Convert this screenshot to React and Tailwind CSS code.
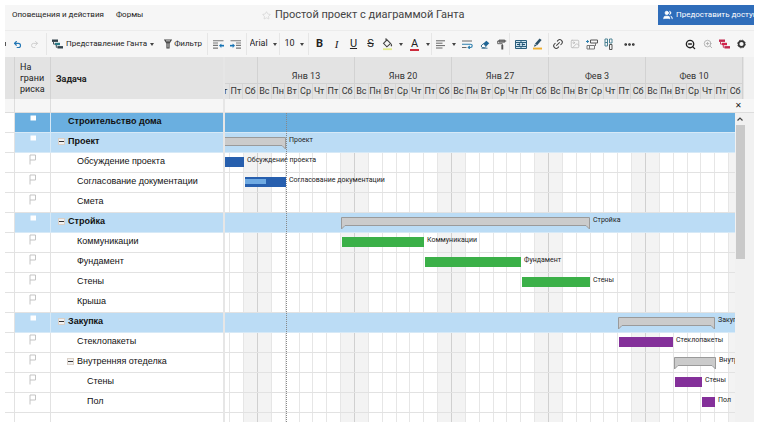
import React, { useState } from 'react';
import { Undo2, Redo2, Star, Link2, Image, ZoomOut, ZoomIn, Users, Ellipsis } from 'lucide-react';

// One week is 97px wide, the first full week starts on day 0
const WEEK = 97;
const DAY = WEEK / 7;

const weeks = ['', 'Янв 13', 'Янв 20', 'Янв 27', 'Фев 3', 'Фев 10'];
const days = ['Вс', 'Пн', 'Вт', 'Ср', 'Чт', 'Пт', 'Сб'];

const tasks = [
  { name: 'Строительство дома', level: 0, type: 'root' },
  { name: 'Проект', level: 0, type: 'group', start: -6, end: 2 },
  { name: 'Обсуждение проекта', level: 1, type: 'task', start: -6, end: -1, color: 'blue' },
  { name: 'Согласование документации', level: 1, type: 'task', start: -1, end: 2, color: 'blue', progress: 50 },
  { name: 'Смета', level: 1, type: 'task' },
  { name: 'Стройка', level: 0, type: 'group', start: 6, end: 24 },
  { name: 'Коммуникации', level: 1, type: 'task', start: 6, end: 12, color: 'green' },
  { name: 'Фундамент', level: 1, type: 'task', start: 12, end: 19, color: 'green' },
  { name: 'Стены', level: 1, type: 'task', start: 19, end: 24, color: 'green' },
  { name: 'Крыша', level: 1, type: 'task' },
  { name: 'Закупка', level: 0, type: 'group', start: 26, end: 33 },
  { name: 'Стеклопакеты', level: 1, type: 'task', start: 26, end: 30, color: 'purple' },
  { name: 'Внутренняя отеделка', level: 1, type: 'subgroup', start: 30, end: 33 },
  { name: 'Стены', level: 2, type: 'task', start: 30, end: 32, color: 'purple' },
  { name: 'Пол', level: 2, type: 'task', start: 32, end: 33, color: 'purple' },
];

const rowBg = {
  root: 'bg-[#6aafe0]',
  group: 'bg-[#bbdcf5]',
  subgroup: '',
  task: '',
};

const barBg = {
  blue: 'bg-[#275fae]',
  green: 'bg-[#3bb048]',
  purple: 'bg-[#84309a]',
};

const indent = ['pl-[17px]', 'pl-[26px]', 'pl-9'];

const Caret = () => (
  <svg className="shrink-0" width="4" height="3" viewBox="0 0 4 3" aria-hidden="true">
    <path d="M0 0h4L2 3z" fill="#444" />
  </svg>
);

const GanttIcon = ({ a, b }) => (
  <svg className="shrink-0" width="11" height="10" viewBox="0 0 11 10" aria-hidden="true">
    <path d="M0 0.5h6v2.4H0z" fill={a} />
    <path d="M3 3.8h5v2.4H3z" fill={b} />
    <path d="M5.5 7.1H11v2.4H5.5z" fill={a} />
    <path d="M1.5 2.9v2.2H3M4.3 6v2.3h1.2" stroke={a} strokeWidth="0.9" fill="none" />
  </svg>
);

const FilterIcon = () => (
  <svg className="shrink-0" width="8" height="10" viewBox="0 0 8 10" fill="none" stroke="#444" strokeWidth="1.2" aria-hidden="true">
    <path d="M0.8 1h6.4L5 4.5V9H3V4.5z" />
    <path d="M2 2.2h4L4 5z" fill="#444" stroke="none" />
  </svg>
);

const OutdentIcon = ({ flip }) => (
  <svg className={flip ? '-scale-x-100' : ''} width="11" height="9" viewBox="0 0 11 9" aria-hidden="true">
    <path d="M0 0.7h10.5M0 3h5M0 5.4h5M0 8.1h5" stroke="#777" strokeWidth="1.1" />
    <path d="M6.2 5.6l2-1.7v1.2H11v1.2H8.2v1.2z" fill="#1673b5" stroke="#1673b5" strokeWidth="0.4" />
  </svg>
);

const BucketIcon = () => (
  <svg width="11" height="14" viewBox="0 0 11 14" aria-hidden="true">
    <path d="M4 1.2v3M1.5 6.3L5 2.8l3.6 3.6-3.7 3.4z" fill="none" stroke="#444" strokeWidth="1.1" />
    <path d="M9.4 6.5c.9 1.4 1.1 2.8 0 2.9-1 0-.8-1.5 0-2.9z" fill="#444" />
    <path d="M1 11.3h9v1.8H1z" fill="#e3ec8e" />
  </svg>
);

const AlignIcon = () => (
  <svg width="10" height="9" viewBox="0 0 10 9" aria-hidden="true">
    <path d="M0 0.8h9M0 3.2h6.5M0 5.6h9M0 8h6.5" stroke="#666" strokeWidth="1" />
  </svg>
);

const WrapIcon = () => (
  <svg width="11" height="9" viewBox="0 0 11 9" fill="none" aria-hidden="true">
    <path d="M0 1h10M0 7.5h4.5" stroke="#666" strokeWidth="1" />
    <path d="M0 4.2h8.5c2.3 0 2.3 3.3 0 3.3H6.5M7.8 6L6.2 7.5l1.6 1.4" stroke="#2d7fae" strokeWidth="1.1" />
  </svg>
);

const EraserIcon = () => (
  <svg width="10" height="9" viewBox="0 0 10 9" aria-hidden="true">
    <path d="M3.2 3.7L6.3 0.7l3 2.6-3.1 3z" fill="#1e6596" />
    <path d="M3.2 3.7L1 6l1.5 1.7h2.2l1.5-1.4z" fill="#fff" stroke="#1e5a80" strokeWidth="0.9" />
    <path d="M1.5 8.2h6" stroke="#1e5a80" strokeWidth="0.8" />
  </svg>
);

const PainterIcon = () => (
  <svg width="10" height="11" viewBox="0 0 10 11" fill="none" stroke="#555" aria-hidden="true">
    <path d="M2 1.1h5.8v2H2z" fill="#888" strokeWidth="1" />
    <path d="M2 2H0.7v2.7h4.6v1.5M7.8 2H9.3" strokeWidth="0.9" />
    <path d="M5.3 6v4.5" strokeWidth="1.9" />
  </svg>
);

const MergeIcon = () => (
  <svg width="12" height="9" viewBox="0 0 12 9" aria-hidden="true">
    <path d="M0.5 0.5h11v8h-11z" fill="#cfe3ee" stroke="#2b5f7d" strokeWidth="1" />
    <path d="M6 0v2.2M6 6.8V9M0.5 2.5h11M0.5 6.5h11" stroke="#2b5f7d" strokeWidth="1" />
    <path d="M2 4.5h3M10 4.5H7M3.8 3.2l1.4 1.3-1.4 1.3M8.2 3.2L6.8 4.5l1.4 1.3" stroke="#1b4f70" strokeWidth="1" fill="none" />
  </svg>
);

const HighlightIcon = () => (
  <svg width="11" height="12" viewBox="0 0 11 12" aria-hidden="true">
    <path d="M3 5.7L7.6 0.5l2 1.6-4.4 5.2z" fill="#2b5068" />
    <path d="M2.8 6.2l2 1.6-2.9.9z" fill="#2b5068" />
    <path d="M1 9.6h9v1.9H1z" fill="#f0b030" />
  </svg>
);

const RowIcon = () => (
  <svg width="12" height="11" viewBox="0 0 12 11" fill="none" strokeWidth="1" aria-hidden="true">
    <path d="M4.5 1h7v3h-7z" stroke="#555" />
    <path d="M1 6.5h7.5V10H1zM3.5 6.5V10M9.5 4v3" stroke="#777" />
    <path d="M0 2.5h3M1.6 1v3" stroke="#2d7fae" />
  </svg>
);

const ColumnIcon = () => (
  <svg width="9" height="12" viewBox="0 0 9 12" fill="none" strokeWidth="1" aria-hidden="true">
    <path d="M1 1h2.5v7H1zM1 4.5h2.5" stroke="#4d8394" />
    <path d="M5.5 1H8v4H5.5z" stroke="#4d8394" />
    <path d="M5.5 6.5H8v5H5.5z" stroke="#555" />
  </svg>
);

const GearIcon = () => (
  <svg width="9" height="10" viewBox="0 0 9 10" fill="none" stroke="#333" aria-hidden="true">
    <circle cx="4.5" cy="5" r="2.9" strokeWidth="1.6" />
    <circle cx="4.5" cy="5" r="3.9" strokeWidth="0.8" strokeDasharray="1.6 1.46" />
  </svg>
);

const FlagIcon = ({ filled }) => (
  <svg width="8" height="11" viewBox="0 0 8 11" aria-hidden="true">
    {filled ? (
      <path d="M1.5 1.5h5.5v5H1.5z" fill="#fff" />
    ) : (
      <path d="M1 10.5V1h5.5v5H1" fill="none" stroke="#c4c4c4" strokeWidth="1" />
    )}
  </svg>
);

const Tool = ({ label, children }) => (
  <button type="button" aria-label={label} className="flex h-5 w-[17px] shrink-0 items-center justify-center">
    {children}
  </button>
);

const CaretTool = ({ label }) => (
  <button type="button" aria-label={label} className="flex h-5 w-[10px] shrink-0 items-center justify-center">
    <Caret />
  </button>
);

const groupStyles = 'flex shrink-0 items-center border-r border-[#e6e6e6]';

const TopBar = () => (
  <header className="flex h-[26px] items-start border-b border-[#ececec] bg-[#f6f6f6]">
    <nav className="flex w-[257px] shrink-0 gap-3 pl-[7px] pt-[3px] text-[8px] leading-[14px] text-[#222]">
      <a href="#alerts">Оповещения и действия</a>
      <a href="#forms">Формы</a>
    </nav>
    <div className="flex items-center gap-[4px]">
      <button type="button" aria-label="В избранное">
        <Star size={9} strokeWidth={1.5} className="text-[#ccc]" />
      </button>
      <h1 className="whitespace-nowrap text-[11px] leading-5 text-[#444]">Простой проект с диаграммой Ганта</h1>
    </div>
    <button
      type="button"
      className="ml-auto flex h-5 w-24 shrink-0 items-center gap-[3px] overflow-hidden whitespace-nowrap bg-[#2f6dba] pl-[5px] text-[8px] text-white"
    >
      <Users size={10} fill="currentColor" className="shrink-0" />
      Предоставить доступ
    </button>
  </header>
);

const Toolbar = () => {
  const [font, setFont] = useState('Arial');
  const [size, setSize] = useState('10');

  return (
    <div className="flex h-[26px] overflow-hidden bg-[#f6f6f6] py-[2px] text-[8px] text-[#222]">
      <div className={`${groupStyles} pr-[3px]`}>
        <span className="mr-[3px] h-1 w-px bg-[#555]" />
        <Tool label="Отменить"><Undo2 size={9} strokeWidth={3} className="text-[#2377b5]" /></Tool>
        <Tool label="Повторить"><Redo2 size={9} strokeWidth={2.5} className="text-[#ccc]" /></Tool>
      </div>
      <div className={`${groupStyles} w-[161px] justify-between pl-[5px] pr-[5px]`}>
        <button type="button" className="flex items-center gap-[3px] whitespace-nowrap">
          <GanttIcon a="#33424a" b="#2b7a86" />
          Представление Ганта
          <Caret />
        </button>
        <button type="button" className="flex items-center gap-[2px]">
          <FilterIcon />
          Фильтр
        </button>
      </div>
      <div className={`${groupStyles} w-[39px] justify-center`}>
        <Tool label="Уменьшить отступ"><OutdentIcon /></Tool>
        <Tool label="Увеличить отступ"><OutdentIcon flip /></Tool>
      </div>
      <label className={`${groupStyles} w-[33px] justify-center gap-1 text-[9px]`}>
        <select aria-label="Шрифт" className="appearance-none" value={font} onChange={(e) => setFont(e.target.value)}>
          <option>Arial</option>
        </select>
        <Caret />
      </label>
      <label className={`${groupStyles} w-[29px] justify-center gap-1 text-[9px]`}>
        <select aria-label="Размер шрифта" className="appearance-none" value={size} onChange={(e) => setSize(e.target.value)}>
          <option>10</option>
        </select>
        <Caret />
      </label>
      <div className={`${groupStyles} w-[123px] pl-[2px] text-[11px]`}>
        <Tool label="Жирный"><b>B</b></Tool>
        <Tool label="Курсив"><i className="font-['Liberation_Serif',serif]">I</i></Tool>
        <Tool label="Подчёркнутый"><u>U</u></Tool>
        <Tool label="Зачёркнутый"><s>S</s></Tool>
        <Tool label="Цвет фона"><BucketIcon /></Tool>
        <CaretTool label="Выбрать цвет фона" />
        <Tool label="Цвет текста">
          <span className="border-b-2 border-[#cc2b3c] px-px leading-[11px]">A</span>
        </Tool>
        <CaretTool label="Выбрать цвет текста" />
      </div>
      <div className={`${groupStyles} w-[78px]`}>
        <Tool label="Выравнивание"><AlignIcon /></Tool>
        <CaretTool label="Выбрать выравнивание" />
        <Tool label="Перенос текста"><WrapIcon /></Tool>
        <Tool label="Очистить формат"><EraserIcon /></Tool>
        <Tool label="Формат по образцу"><PainterIcon /></Tool>
      </div>
      <div className={`${groupStyles} w-[39px] justify-center`}>
        <Tool label="Объединить"><MergeIcon /></Tool>
        <Tool label="Выделить изменения"><HighlightIcon /></Tool>
      </div>
      <div className="flex shrink-0 items-center">
        <Tool label="Ссылка"><Link2 size={12} className="-rotate-45 text-[#444]" /></Tool>
        <Tool label="Изображение"><Image size={10} className="text-[#bbb]" /></Tool>
        <Tool label="Вставить строку"><RowIcon /></Tool>
        <Tool label="Вставить столбец"><ColumnIcon /></Tool>
        <span className="w-1" />
        <Tool label="Ещё"><Ellipsis size={13} strokeWidth={3} /></Tool>
      </div>
      <div className="ml-auto flex shrink-0 items-center pr-1">
        <Tool label="Уменьшить"><ZoomOut size={11} strokeWidth={3} /></Tool>
        <Tool label="Увеличить"><ZoomIn size={10} className="text-[#aaa]" /></Tool>
        <Tool label="Критический путь"><GanttIcon a="#c2274e" b="#d3234b" /></Tool>
        <Tool label="Настройки"><GearIcon /></Tool>
      </div>
    </div>
  );
};

const TaskTable = () => (
  <table className="w-[218px] shrink-0 table-fixed border-separate border-spacing-0 text-left">
    <colgroup>
      <col className="w-[10px]" />
      <col className="w-9" />
      <col />
    </colgroup>
    <thead>
      <tr className="h-[42px] bg-[#e3e3e3] text-[9px] leading-[11px] text-[#222]">
        <td className="border-r border-[#d2d2d2]" />
        <th className="border-r border-[#d2d2d2] pl-[5px] align-middle font-normal">
          На<br />грани<br />риска
        </th>
        <th className="pl-[5px] pt-[2px] align-middle font-bold">Задача</th>
      </tr>
      <tr className="h-[14px] bg-[#f6f6f6]">
        <td className="border-b border-r border-[#ddd]" />
        <td className="border-b border-r border-[#ddd]" />
        <td className="border-b border-[#ddd]" />
      </tr>
    </thead>
    <tbody className="font-['Liberation_Sans',sans-serif] text-[9px] leading-3 text-[#111]">
      {tasks.map((task, i) => {
        const blue = task.type === 'root' || task.type === 'group';
        const cell = `${rowBg[task.type]} h-5 border-b p-0 align-top ${blue ? 'border-[#d6e9f7]' : 'border-[#e2e2e2]'}`;
        return (
          <tr key={i}>
            <td className="h-5 border-b border-r border-[#e2e2e2] p-0" />
            <td className={`${cell} border-r`}>
              <span className="flex justify-center pt-px"><FlagIcon filled={blue} /></span>
            </td>
            <td className={cell}>
              <div className={`flex items-center pt-[2px] ${indent[task.level]} ${blue ? 'font-bold' : ''}`}>
                {(task.type === 'group' || task.type === 'subgroup') && (
                  <button
                    type="button"
                    aria-label="Свернуть"
                    className="-ml-[10px] mr-[3px] flex size-[7px] items-center justify-center border border-[#d9cfc6] bg-[#f2f2f2]"
                  >
                    <span className="h-px w-[5px] shrink-0 bg-[#333]" />
                  </button>
                )}
                {task.name}
              </div>
            </td>
          </tr>
        );
      })}
      <tr className="h-[9px]">
        <td className="border-r border-[#e2e2e2]" />
        <td className="border-r border-[#e2e2e2]" />
        <td />
      </tr>
    </tbody>
  </table>
);

const SummaryBar = ({ width }) => (
  <svg width={width} height="13" viewBox={`0 0 ${width} 13`} aria-hidden="true">
    <path
      d={`M0.5 0.5H${width - 0.5}V12L${width - 4} 8.5H4L0.5 12Z`}
      fill="#cbcbcb"
      stroke="#9a9a9a"
    />
  </svg>
);

const ChartRow = ({ task }) => {
  const blue = task.type === 'root' || task.type === 'group';
  const left = Math.round(task.start * DAY) + WEEK;
  const width = Math.round((task.end - task.start) * DAY);

  return (
    <div className={`relative h-5 border-b ${rowBg[task.type]} ${blue ? 'border-[#d6e9f7]' : 'border-[#e2e2e2]'}`}>
      {task.end !== undefined && (
        <div className="absolute top-1 flex items-start gap-[3px]" style={{ left }}>
          {task.type === 'task' ? (
            <div className={`h-[10px] border-l border-[#ffffff80] bg-clip-padding ${barBg[task.color]}`} style={{ width }}>
              {task.progress && (
                <div className="mt-[2px] h-[5px] bg-[#6faae2]" style={{ width: `${task.progress}%` }} />
              )}
            </div>
          ) : (
            <SummaryBar width={width} />
          )}
          <span className="-mt-[3px] whitespace-nowrap text-[7px] leading-3 text-[#222]">{task.name}</span>
        </div>
      )}
    </div>
  );
};

const Chart = () => (
  <section className="flex min-w-0 flex-1 flex-col" aria-label="Диаграмма">
    <div className="flex bg-[#f1f1f1]">
      <div className="mr-[10px] flex h-[42px] flex-1 overflow-hidden bg-[#e3e3e3] text-[9px] text-[#333]">
        <div className="-ml-16 flex">
          {weeks.map((week, w) => (
            <div key={week} className="w-[97px] shrink-0 border-r border-[#d2d2d2]">
              <div className="h-[27px] border-b border-[#d2d2d2] pt-3 text-center leading-[14px]">{week}</div>
              <div className="grid grid-cols-7 text-center leading-[15px]">
                {days.map((day, d) => (
                  <span key={day} className="h-[15px] border-r border-[#d6d6d6] last:border-0">
                    {(w > 0 || d > 3) && day}
                  </span>
                ))}
              </div>
            </div>
          ))}
        </div>
      </div>
    </div>
    <div className="flex h-[14px] justify-end border-b border-[#ddd] bg-[#f6f6f6] pr-3">
      <button type="button" aria-label="Закрыть" className="text-[8px] leading-[13px] text-[#222]">✕</button>
    </div>
    <div className="flex flex-1 bg-[#f1f1f1]">
      <div className="relative flex-1 overflow-hidden bg-white">
        {/* day grid behind the rows */}
        <div className="absolute inset-y-0 left-0 -ml-16 flex">
          {weeks.map((week) => (
            <div key={week} className="grid w-[97px] shrink-0 grid-cols-7">
              {days.map((day) => (
                <span
                  key={day}
                  className="border-r border-[#e6e6e6] first:bg-[#f3f3f3] last:border-[#d0d0d0] last:bg-[#f3f3f3]"
                />
              ))}
            </div>
          ))}
        </div>
        <div className="relative -ml-16">
          {tasks.map((task, i) => (
            <ChartRow key={i} task={task} />
          ))}
          <div className="h-[9px]" />
          {/* today */}
          <div className="absolute inset-y-0 border-l border-dotted border-[#888]" style={{ left: WEEK + Math.round(2 * DAY) }} />
        </div>
      </div>
      <div className="mr-[9px] flex w-[10px] shrink-0 flex-col items-center">
        <button type="button" aria-label="Вверх" className="flex h-3 items-center">
          <svg width="6" height="4" viewBox="0 0 6 4" fill="none" stroke="#444" strokeWidth="1.2">
            <path d="M0.5 3.5L3 1l2.5 2.5" />
          </svg>
        </button>
        <div className="h-[134px] w-[9px] bg-[#c9c9c9]" />
      </div>
    </div>
  </section>
);

export default function App() {
  return (
    <div className="bg-white p-[5px] font-['Roboto',sans-serif]">
      <TopBar />
      <Toolbar />
      <main className="flex">
        <TaskTable />
        <div className="w-[2px] shrink-0 bg-[#e6e6e6]" />
        <Chart />
      </main>
    </div>
  );
}
